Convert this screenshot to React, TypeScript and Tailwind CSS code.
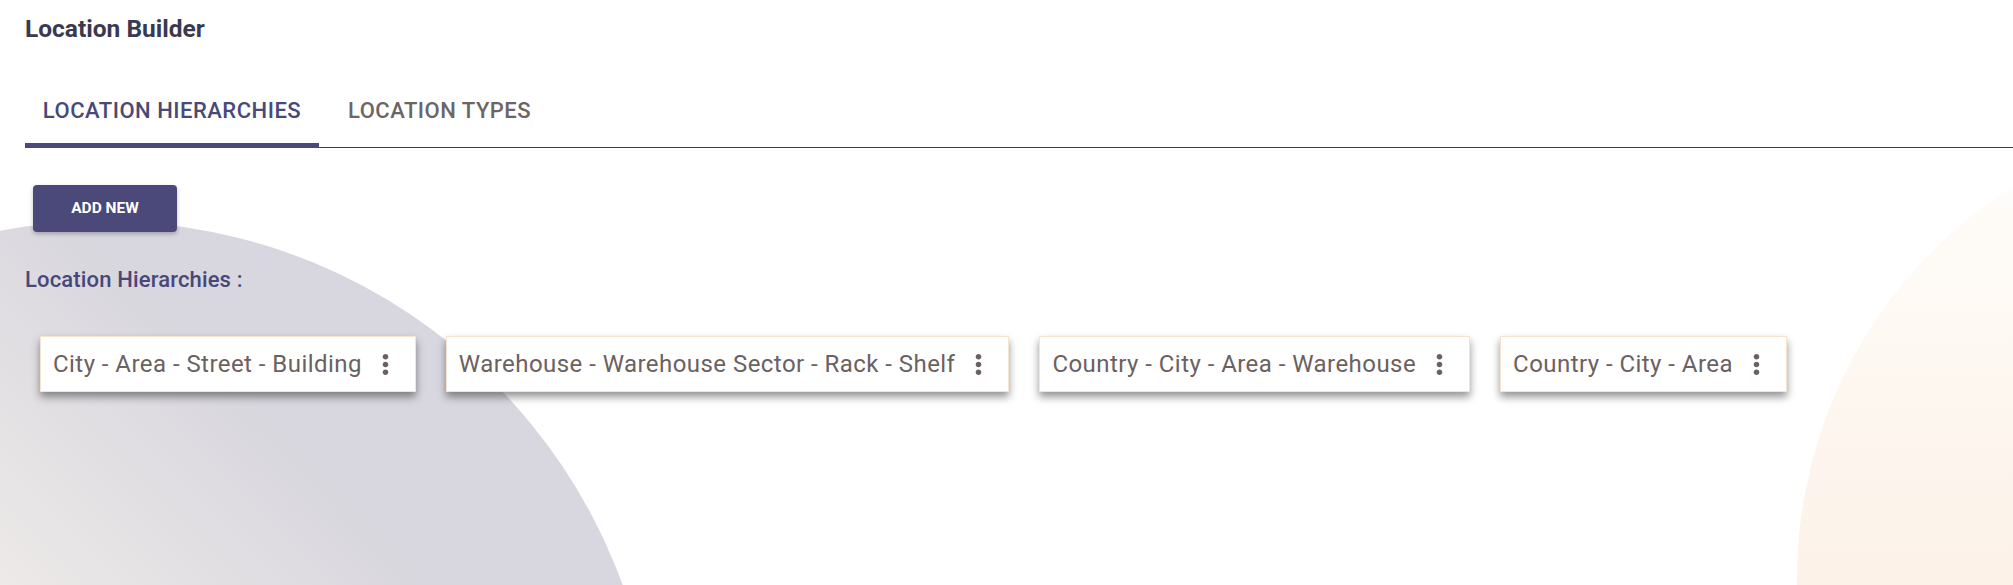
import React from "react";

const hierarchies = [
  "City - Area - Street - Building",
  "Warehouse - Warehouse Sector - Rack - Shelf",
  "Country - City - Area - Warehouse",
  "Country - City - Area",
];

function MoreVert() {
  return (
    <svg viewBox="0 0 24 24" className="w-[31px] h-[31px] shrink-0" fill="#6a6060">
      <path d="M12 8.2c1.2 0 2.2-1 2.2-2.2s-1-2.2-2.2-2.2-2.2 1-2.2 2.2 1 2.2 2.2 2.2zm0 1.6c-1.2 0-2.2 1-2.2 2.2s1 2.2 2.2 2.2 2.2-1 2.2-2.2-1-2.2-2.2-2.2zm0 6c-1.2 0-2.2 1-2.2 2.2s1 2.2 2.2 2.2 2.2-1 2.2-2.2-1-2.2-2.2-2.2z" />
    </svg>
  );
}

export default function App() {
  return (
    <div
      className="relative w-full h-[585px] overflow-hidden bg-white"
      style={{ fontFamily: "Roboto, 'Liberation Sans', sans-serif" }}
    >
      {/* decorative background circles */}
      <div className="absolute left-[-450px] top-[221px] w-[1106px] h-[1106px] rounded-full bg-[linear-gradient(45deg,#f5f1ec_46%,#d8d6de_74%)]" />
      <div className="absolute left-[1797px] top-[114px] w-[930px] h-[930px] rounded-full bg-[linear-gradient(180deg,#fffdfa_5%,#fcf2e8_50%)]" />

      <div className="relative pl-[25px] flex flex-col items-start">
        <h1 className="mt-[15px] text-[24.5px] leading-[28px] font-bold text-[#3b3950]">
          Location Builder
        </h1>

        <div className="mt-[41px] w-full flex border-b border-[#3d3a4e]">
          <div className="relative w-[294px] h-[63px] pt-[14px] flex justify-center">
            <span className="text-[22px] leading-[26px] font-medium uppercase tracking-[0.5px] text-[#494978]">
              Location Hierarchies
            </span>
            <div className="absolute left-0 right-0 -bottom-px h-[5px] bg-[#4a4a7a]" />
          </div>
          <div className="h-[63px] pt-[14px] px-[29px] flex justify-center">
            <span className="text-[22px] leading-[26px] font-medium uppercase tracking-[0.5px] text-[#6d6565]">
              Location Types
            </span>
          </div>
        </div>

        <button className="mt-[37px] ml-[8px] w-[144px] h-[47px] rounded-[4px] bg-[#4a4979] text-white text-[15.5px] font-bold uppercase shadow-[0_2px_4px_rgba(0,0,0,0.25)]">
          Add New
        </button>

        <div className="mt-[35px] text-[22px] leading-[26px] font-medium tracking-[0.15px] text-[#48477a]">
          Location Hierarchies :
        </div>

        <div className="mt-[43px] ml-[15px] flex gap-[30px]">
          {hierarchies.map((h) => (
            <div
              key={h}
              className="h-[56px] flex items-center pl-[12px] pr-[14px] bg-white border border-[#f4e4d0] shadow-[0_5px_8px_rgba(0,0,0,0.42)]"
            >
              <span className="text-[24px] leading-[28px] tracking-[0.45px] text-[#6b6161] whitespace-nowrap">
                {h}
              </span>
              <span className="ml-[8px] flex items-center">
                <MoreVert />
              </span>
            </div>
          ))}
        </div>
      </div>
    </div>
  );
}
